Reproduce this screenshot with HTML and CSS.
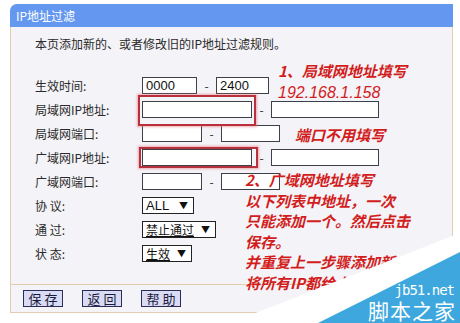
FILE: index.html
```html
<!DOCTYPE html>
<html lang="zh-CN">
<head>
    <meta charset="UTF-8">
    <title>IP地址过滤</title>
    <link rel="stylesheet" href="styles.css">
</head>
<body>
    <div class="panel">
        <div class="panel-title">IP地址过滤</div>
        <div class="panel-body">
            <p class="intro">本页添加新的、或者修改旧的IP地址过滤规则。</p>
            <div class="form">
                <div class="row">
                    <span class="label">生效时间:</span>
                    <div class="field">
                        <input class="w55" value="0000"><span class="dash">-</span><input class="w53" value="2400">
                    </div>
                </div>
                <div class="row">
                    <span class="label">局域网IP地址:</span>
                    <div class="field">
                        <span class="mark mark-lan"><input class="w110"></span><span class="dash">-</span><input class="w108">
                    </div>
                </div>
                <div class="row">
                    <span class="label">局域网端口:</span>
                    <div class="field">
                        <input class="w60"><span class="dash">-</span><input class="w59">
                    </div>
                </div>
                <div class="row">
                    <span class="label">广域网IP地址:</span>
                    <div class="field">
                        <span class="mark mark-wan"><input class="w110"></span><span class="dash">-</span><input class="w108">
                    </div>
                </div>
                <div class="row">
                    <span class="label">广域网端口:</span>
                    <div class="field">
                        <input class="w60"><span class="dash">-</span><input class="w59">
                    </div>
                </div>
                <div class="row">
                    <span class="label">协 议:</span>
                    <div class="select w52"><span class="val plain">ALL</span><span class="arrow">▼</span></div>
                </div>
                <div class="row">
                    <span class="label">通 过:</span>
                    <div class="select w74"><span class="val">禁止通过</span><span class="arrow">▼</span></div>
                </div>
                <div class="row">
                    <span class="label">状 态:</span>
                    <div class="select w50"><span class="val">生效</span><span class="arrow">▼</span></div>
                </div>
            </div>
        </div>
        <div class="panel-foot">
            <button>保存</button>
            <button>返回</button>
            <button>帮助</button>
        </div>
    </div>

    <!-- handwritten notes drawn over the screenshot -->
    <div class="note note-lan">
        <div>1、局域网地址填写</div>
        <div class="ip">192.168.1.158</div>
    </div>
    <div class="note note-port">端口不用填写</div>
    <div class="note note-wan">
        <div>2、广域网地址填写</div>
        <div>以下列表中地址，一次</div>
        <div>只能添加一个。然后点击</div>
        <div>保存。</div>
        <div>并重复上一步骤添加新条目，</div>
        <div>将所有IP都给上。</div>
    </div>

    <div class="watermark">
        <svg width="230" height="91" viewBox="0 0 230 91">
            <polygon points="0,91 230,1 230,91" fill="#ffffff"/>
            <polygon points="88,91 230,20 230,91" fill="#3da7de"/>
        </svg>
        <span class="wm-site">jb51.net</span>
        <span class="wm-name">脚本之家</span>
    </div>
</body>
</html>
```

FILE: styles.css
```css
body {
    margin: 4px 7px 0 10px;
    background: #fff;
    font-family: "Noto Sans CJK SC", sans-serif;
    font-size: 12px;
    color: #2a2a2a;
}
.panel {
    width: 443px;
    box-sizing: border-box;
    border: 1px solid #e3cdb2;
    border-top: none;
    border-radius: 7px 0 0 0;
    background: #f4f3f7;
}
.panel-title {
    height: 23px;
    line-height: 23px;
    margin: 0 -1px;
    padding-left: 6px;
    background: #6497f0;
    color: #fff;
    border-radius: 7px 0 0 0;
}
.panel-body {
    height: 258px;
    box-sizing: border-box;
    padding: 11px 0 0 24px;
    border-bottom: 1px solid #e3cdb2;
}
.intro {
    margin: 0;
    line-height: 12px;
}
.form {
    margin-top: 23px;
}
.row {
    display: flex;
    align-items: center;
    height: 24px;
}
.label {
    width: 107px;
    flex-shrink: 0;
}
.field {
    display: flex;
    align-items: center;
}
input {
    height: 17px;
    box-sizing: border-box;
    margin: 0;
    padding: 0 3px;
    border: 1px solid #3b4049;
    background: #fff;
    font: 13px "Liberation Sans", sans-serif;
    color: #111;
}
.dash {
    width: 19px;
    text-align: center;
}
.w50 { width: 50px; }
.w52 { width: 52px; }
.w53 { width: 53px; }
.w55 { width: 55px; }
.w59 { width: 59px; }
.w60 { width: 60px; }
.w74 { width: 74px; }
.w108 { width: 108px; }
.w110 { width: 110px; }
.mark {
    position: relative;
    display: flex;
}
.mark::after {
    content: "";
    position: absolute;
    border: 2px solid #b8303c;
    box-shadow: 0 0 2px 1px rgba(230, 120, 130, 0.6);
}
.mark-lan::after {
    top: -6px;
    bottom: -8px;
    left: -4px;
    right: -4px;
}
.mark-wan::after {
    top: -2px;
    bottom: -2px;
    left: -3px;
    right: -6px;
}
.select {
    height: 17px;
    box-sizing: border-box;
    display: flex;
    align-items: center;
    padding: 0 5px 0 3px;
    border: 1px solid #222;
    background: #fff;
    color: #111;
}
.select .val {
    flex: 1;
    text-decoration: underline;
    font: 12px "Liberation Sans", "Noto Sans CJK SC", sans-serif;
}
.select .val.plain {
    text-decoration: none;
    font-size: 13px;
}
.arrow {
    font-size: 9px;
}
.panel-foot {
    height: 27px;
    display: flex;
    align-items: center;
    gap: 19px;
    padding-left: 12px;
}
button {
    width: 40px;
    height: 17px;
    padding: 0;
    border: 1px solid #2c2c58;
    background: #d9dbf4;
    color: #1a1a3a;
    font-family: "Noto Sans CJK SC", sans-serif;
    font-size: 13px;
    line-height: 15px;
    letter-spacing: 3px;
    text-indent: 3px;
}
.note {
    position: absolute;
    color: #d21d1d;
    font-size: 15px;
    font-weight: bold;
    line-height: 20.5px;
    font-style: italic;
}
.note-lan {
    left: 278px;
    top: 61px;
}
.note-lan .ip {
    font-family: "Liberation Sans", sans-serif;
    font-weight: normal;
    font-size: 16px;
    line-height: 22px;
}
.note-port {
    left: 295px;
    top: 125px;
}
.note-wan {
    left: 245px;
    top: 170px;
}
.watermark {
    position: absolute;
    left: 230px;
    top: 232px;
    width: 230px;
    height: 91px;
}
.watermark svg {
    display: block;
}
.wm-site {
    position: absolute;
    right: 6px;
    top: 51px;
    color: #fff;
    font: 14px/14px "DejaVu Sans Mono", monospace;
    letter-spacing: -1px;
}
.wm-name {
    position: absolute;
    right: 4px;
    top: 67px;
    color: #fff;
    font-size: 21px;
    line-height: 22px;
    letter-spacing: 1px;
}
```
